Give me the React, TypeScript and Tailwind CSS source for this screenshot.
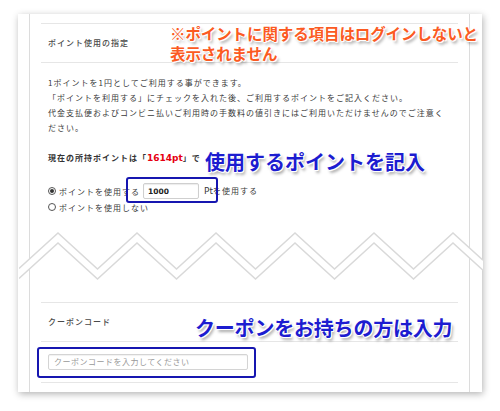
import React from 'react';

const jp = "font-['Noto_Sans_CJK_JP','Noto_Sans',sans-serif]";
const latin = "font-['DejaVu_Sans','Noto_Sans_CJK_JP',sans-serif]";
const halo =
  '[text-shadow:1px_0_0_#fff,-1px_0_0_#fff,0_1px_0_#fff,0_-1px_0_#fff,1px_1px_0_#fff,-1px_-1px_0_#fff,2px_3px_3px_rgba(0,0,0,0.35)]';

function Radio({ checked }: { checked?: boolean }) {
  return (
    <span className="w-[8px] h-[8px] rounded-full border border-[#555] bg-white flex items-center justify-center shrink-0">
      {checked && <span className="w-[4px] h-[4px] rounded-full bg-[#333]" />}
    </span>
  );
}

function ZigZag() {
  const period = 79;
  const yUp = (x: number) => {
    const d = (((x - 39) % period) + period) % period;
    const dist = Math.min(d, period - d);
    return 4 + (dist / (period / 2)) * 36;
  };
  // corner points: ends plus every half period from the first peak
  const xs = [0];
  for (let x = 39; x < 464; x += period / 2) xs.push(x);
  xs.push(464);
  const up = xs.map((x) => `${x},${yUp(x).toFixed(1)}`);
  const low = xs.map((x) => `${x},${(yUp(x) + 10).toFixed(1)}`);
  const band = [...up, ...[...low].reverse()].join(' ');
  return (
    <svg width="464" height="54" viewBox="0 0 464 54" className="block -ml-[22px] relative">
      <polygon points={band} fill="#fff" />
      <polyline points={up.join(' ')} fill="none" stroke="#d9d9d9" strokeWidth="1.5" />
      <polyline points={low.join(' ')} fill="none" stroke="#d9d9d9" strokeWidth="1.5" />
    </svg>
  );
}

export default function App() {
  return (
    <div className={`w-[500px] h-[411px] bg-white pt-[14px] pl-[18px] overflow-hidden ${jp}`}>
      <div className="relative w-[464px] h-[378px] bg-white shadow-[1px_2px_7px_rgba(0,0,0,0.3)]">
        <div className="ml-[11px] w-[441px] h-full border-x border-[#dcdcdc] px-[11px] pt-[9px] text-[#3a3a3a] text-[8px] tracking-[1px]">
          {/* points section */}
          <div className="border-t border-[#e6e6e6]" />
          <div className="h-[39px] flex items-center pl-[7px] border-b border-[#e6e6e6] text-[#4a4a4a] font-medium">
            ポイント使用の指定
          </div>
          <div className="pl-[7px] pt-[12px] leading-[15px]">
            <p>1ポイントを1円としてご利用する事ができます。</p>
            <p>「ポイントを利用する」にチェックを入れた後、ご利用するポイントをご記入ください。</p>
            <p>代金支払便およびコンビニ払いご利用時の手数料の値引きにはご利用いただけませんのでご注意く</p>
            <p>ださい。</p>
            <p className="mt-[15px] font-bold text-[#333]">
              現在の所持ポイントは「
              <span className={`text-[#e60012] text-[9px] tracking-normal ${latin}`}>1614pt</span>
              」で
            </p>
            <div className="mt-[17px] flex items-center gap-[3px] h-[16px]">
              <Radio checked />
              <span>ポイントを使用する</span>
              <span
                className={`w-[56px] h-[16px] border border-[#cfcfcf] rounded-[2px] flex items-center px-[4px] text-[7.5px] font-bold tracking-normal text-[#222] shadow-[inset_0_1px_1px_rgba(0,0,0,0.08)] ${latin}`}
              >
                1000
              </span>
              <span className="ml-[2px]">
                <span className={`text-[9px] tracking-normal ${latin}`}>Pt</span>を使用する
              </span>
            </div>
            <div className="flex items-center gap-[3px] h-[16px]">
              <Radio />
              <span>ポイントを使用しない</span>
            </div>
          </div>

          <div className="mt-[14px]">
            <ZigZag />
          </div>

          {/* coupon section */}
          <div className="mt-[19px] border-t border-[#e6e6e6]" />
          <div className="h-[39px] flex items-center pl-[7px] border-b border-[#e6e6e6] text-[#4a4a4a] font-medium">
            クーポンコード
          </div>
          <div className="pt-[12px] pb-[12px] pl-[7px] border-b border-[#e6e6e6]">
            <div className="w-[200px] h-[16px] border border-[#d4d4d4] rounded-[2px] flex items-center px-[5px] text-[#999] tracking-[0.5px] shadow-[inset_0_1px_1px_rgba(0,0,0,0.06)]">
              クーポンコードを入力してください
            </div>
          </div>
        </div>

        {/* annotations */}
        <div
          className={`absolute left-[152px] top-[9px] text-[15.5px] leading-[20px] font-bold text-[#fb5a22] tracking-[-0.1px] ${halo}`}
        >
          ※ポイントに関する項目はログインしないと
          <br />
          表示されません
        </div>
        <div
          className={`absolute left-[187px] top-[136px] text-[20px] leading-[24px] font-bold text-[#1c1cd0] ${halo}`}
        >
          使用するポイントを記入
        </div>
        <div className="absolute left-[108px] top-[163px] w-[92px] h-[26px] border-2 border-[#1616b0] rounded-[3px]" />
        <div
          className={`absolute left-[177px] top-[302px] text-[20px] leading-[24px] font-bold text-[#1c1cd0] tracking-[-0.2px] ${halo}`}
        >
          クーポンをお持ちの方は入力
        </div>
        <div className="absolute left-[19px] top-[333px] w-[219px] h-[31px] border-2 border-[#1616b0] rounded-[3px]" />
      </div>
    </div>
  );
}
